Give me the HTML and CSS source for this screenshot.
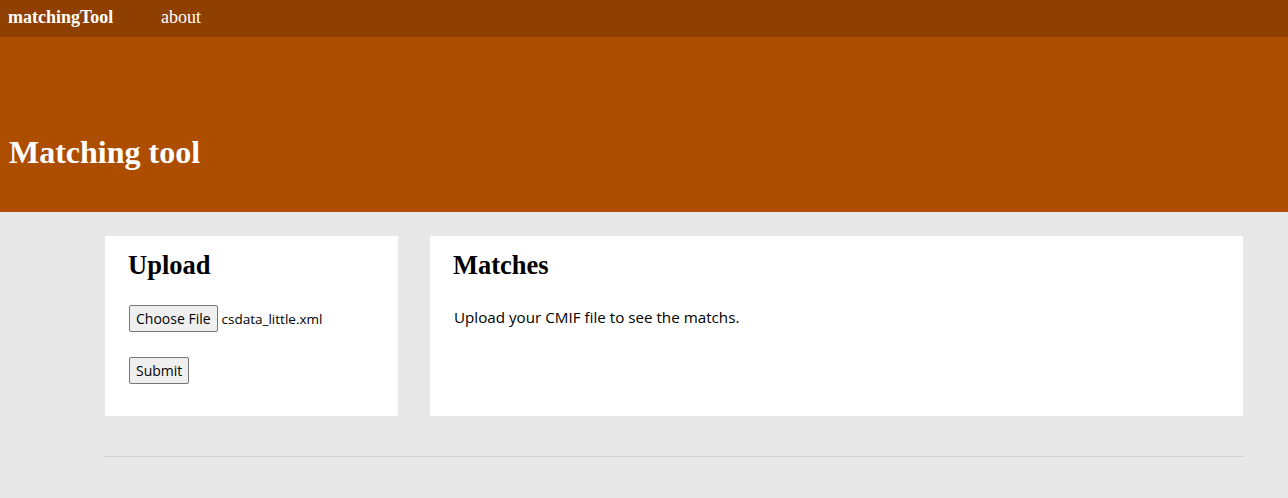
FILE: index.html
```html
<!DOCTYPE html>
<html>
<head>
<meta charset="utf-8">
<link rel="stylesheet" href="styles.css">
</head>
<body>
<nav class="nav">
  <span class="brand">matchingTool</span>
  <span class="nav-link">about</span>
</nav>
<header class="hero">
  <h1 class="hero-title">Matching tool</h1>
</header>
<main class="main">
  <div class="cards">
    <section class="card card-upload">
      <h2 class="card-title">Upload</h2>
      <div class="file-row">
        <button class="btn">Choose File</button>
        <span class="file-name">csdata_little.xml</span>
      </div>
      <div class="submit-row">
        <button class="btn">Submit</button>
      </div>
    </section>
    <section class="card card-matches">
      <h2 class="card-title">Matches</h2>
      <p class="info">Upload your CMIF file to see the matchs.</p>
    </section>
  </div>
  <hr class="rule">
</main>
</body>
</html>
```
FILE: styles.css
```css
html, body {
  margin: 0;
  padding: 0;
}
body {
  background: #e8e8e8;
  font-family: "Liberation Serif", serif;
  height: 498px;
  overflow: hidden;
}
.nav {
  height: 37px;
  background: #8f3f00;
  display: flex;
  align-items: center;
  padding-left: 8px;
  padding-bottom: 2px;
  box-sizing: border-box;
  color: #fff;
  font-size: 18px;
}
.brand {
  font-weight: bold;
  width: 153px;
}
.nav-link {
  font-weight: normal;
}
.hero {
  height: 175px;
  background: #ad4d00;
  display: flex;
  align-items: flex-end;
  padding-left: 9px;
  box-sizing: border-box;
  padding-bottom: 44px;
}
.hero-title {
  margin: 0;
  color: #fff;
  font-size: 32px;
  font-weight: bold;
  line-height: 1;
}
.main {
  padding: 24px 44px 0 104px;
}
.cards {
  display: flex;
  gap: 32px;
  padding-left: 1px;
}
.card {
  background: #fff;
  height: 180px;
  box-sizing: border-box;
  padding: 14px 23px 0;
}
.card-upload {
  width: 293px;
}
.card-matches {
  flex: 1;
  margin-right: 1px;
}
.card-title {
  margin: 0;
  font-size: 26.5px;
  font-weight: bold;
  line-height: 30px;
}
.file-row {
  margin-top: 25px;
  display: flex;
  align-items: center;
  gap: 4px;
  padding-left: 1px;
}
.btn {
  font-family: "Open Sans", "Noto Sans", sans-serif;
  font-size: 14px;
  color: #000;
  background: #efefef;
  border: 1px solid #767676;
  border-radius: 2px;
  height: 27px;
  padding: 0 6px;
  margin: 0;
}
.file-name {
  font-family: "Open Sans", "Noto Sans", sans-serif;
  font-size: 13.5px;
  color: #000;
}
.submit-row {
  margin-top: 25px;
  padding-left: 1px;
}
.info {
  margin: 27px 0 0 1px;
  font-family: "Open Sans", "Noto Sans", sans-serif;
  font-size: 15.2px;
  color: #000;
}
.rule {
  margin: 40px 0 0;
  border: 0;
  border-top: 1px solid #d0d0d0;
  height: 0;
}
```
